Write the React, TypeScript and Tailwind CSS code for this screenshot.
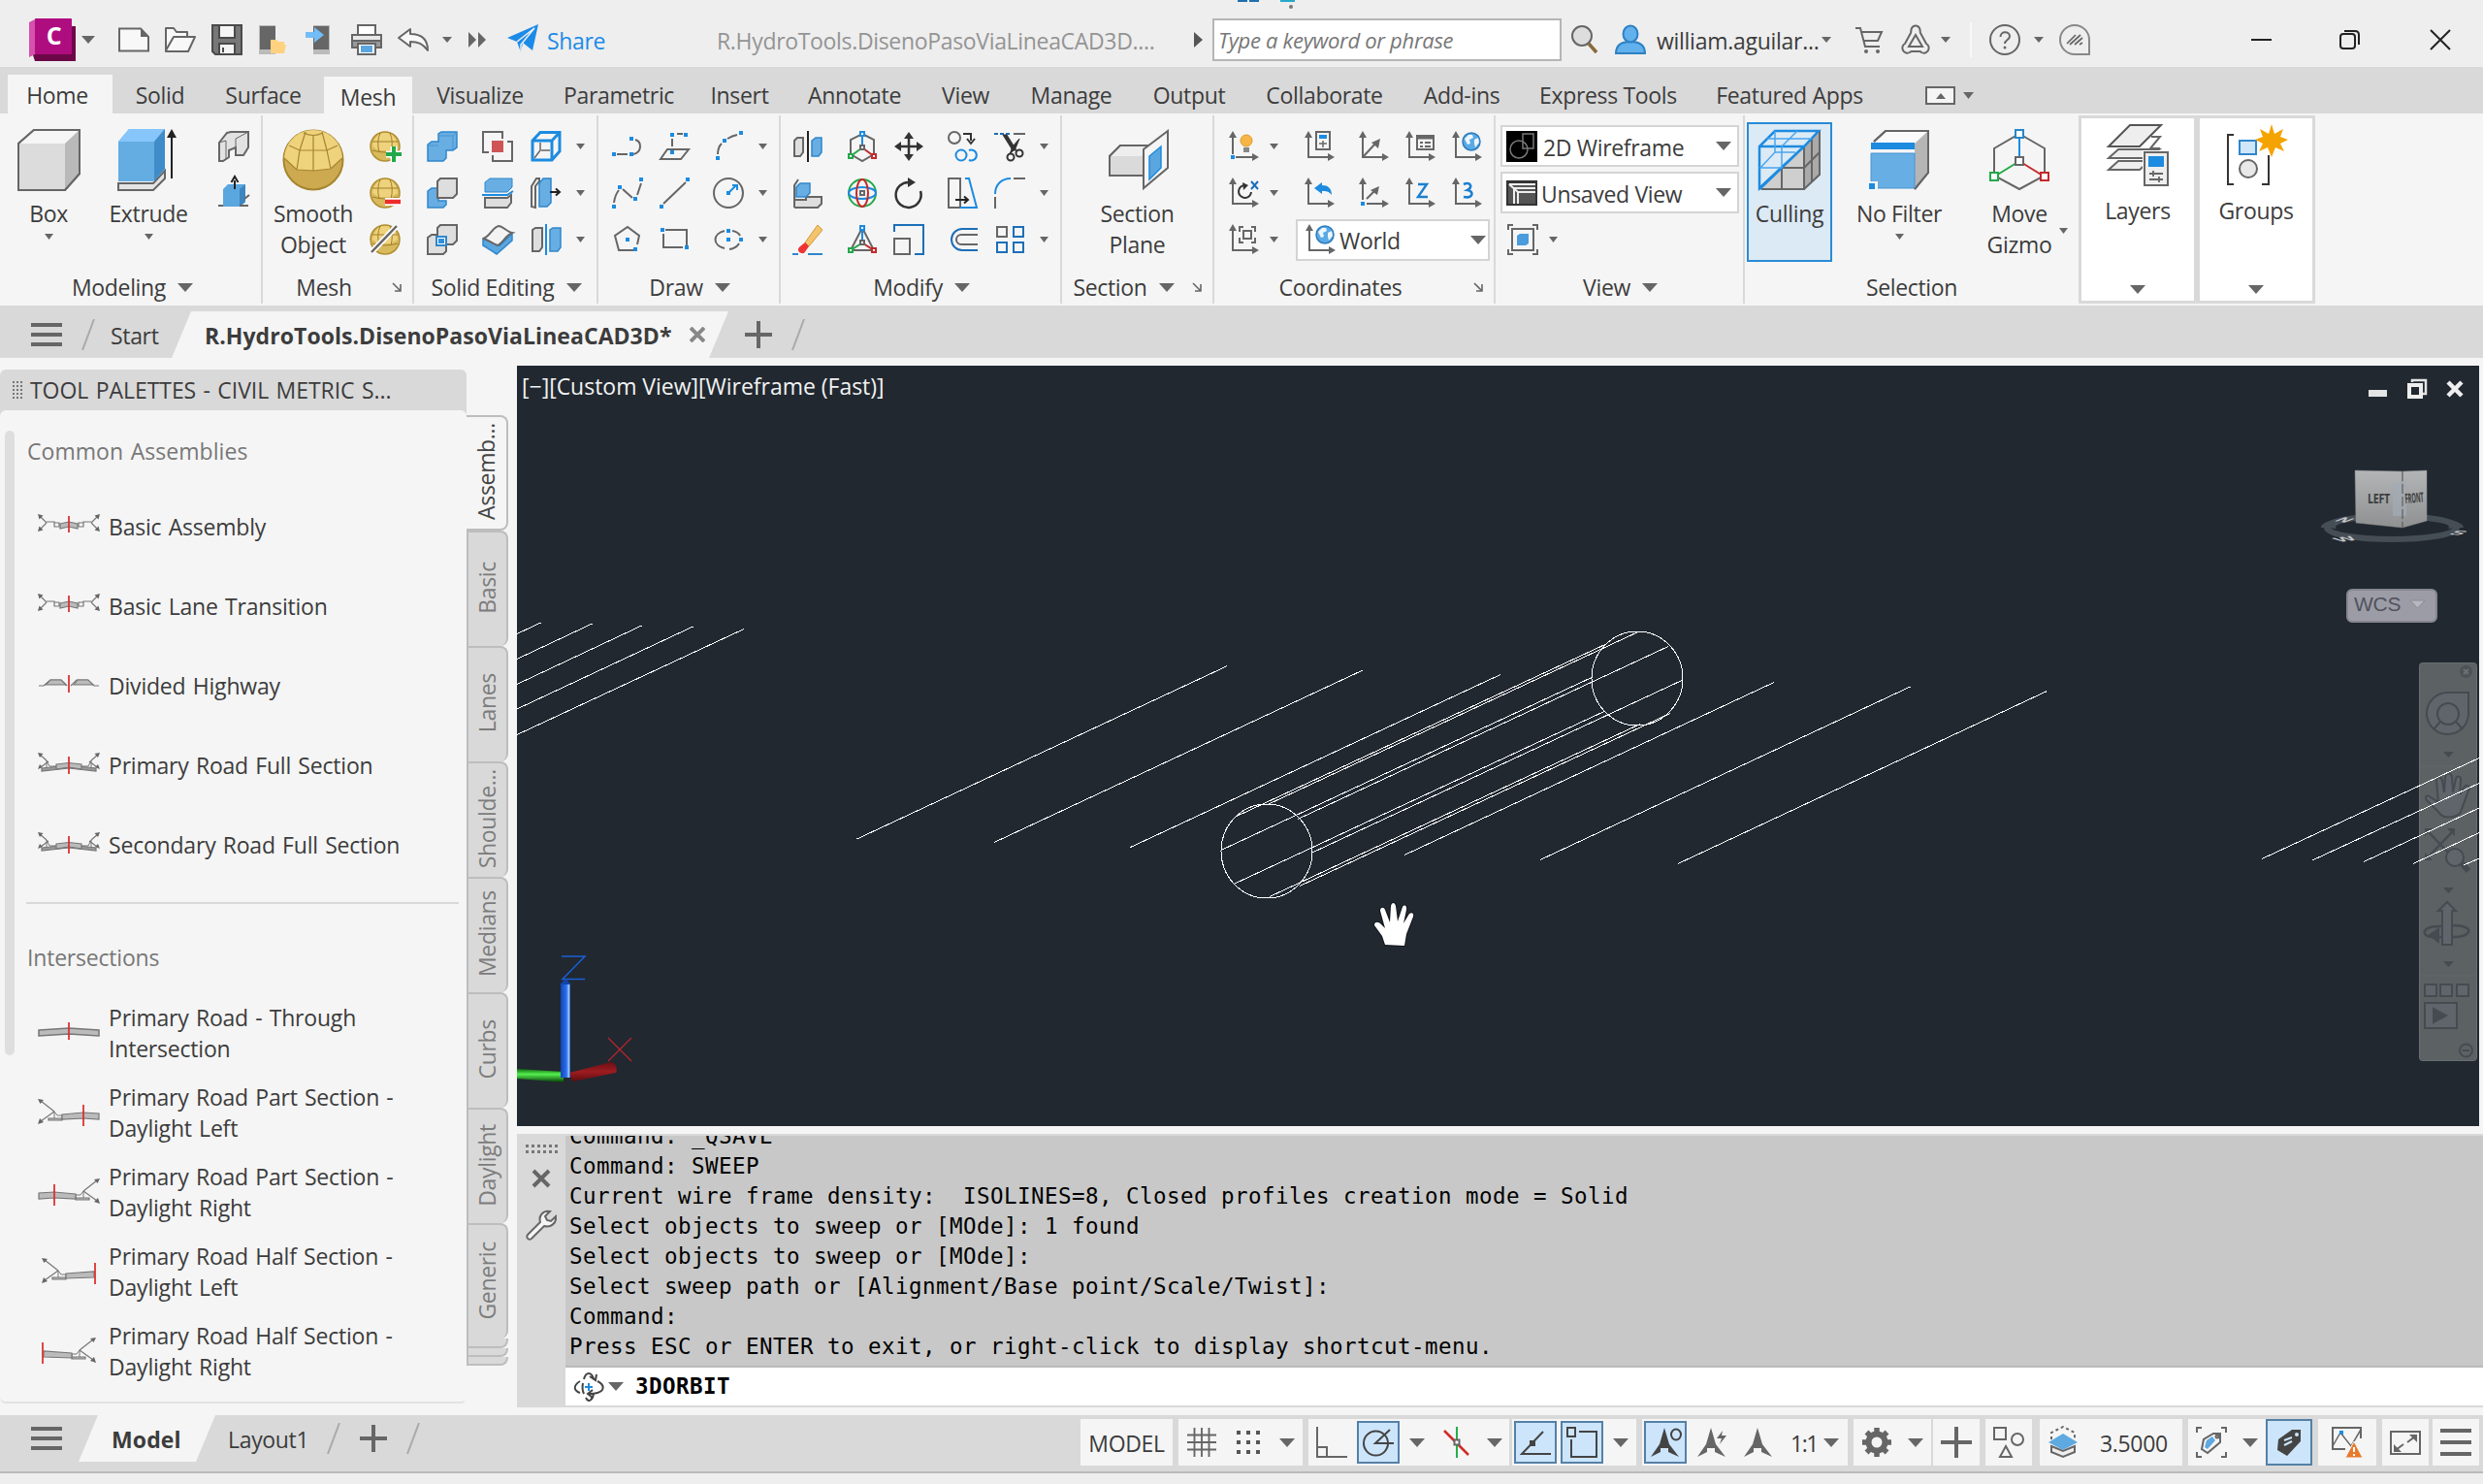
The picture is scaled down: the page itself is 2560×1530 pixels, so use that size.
import React from "react";

type Kids = { children?: React.ReactNode; className?: string };

/* ---------- primitives ---------- */

function Ic({ children, className = "size-8" }: Kids) {
  return (
    <svg viewBox="0 0 32 32" className={`${className} shrink-0 overflow-visible`} fill="none" stroke="#666" strokeWidth="2">
      {children}
    </svg>
  );
}

function Big({ children }: Kids) {
  return (
    <svg viewBox="0 0 64 64" className="size-16 shrink-0 overflow-visible" fill="none" stroke="#666" strokeWidth="2">
      {children}
    </svg>
  );
}

function Down({ className = "w-[9px] h-[6px]" }: { className?: string }) {
  return (
    <svg viewBox="0 0 10 6" preserveAspectRatio="none" className={`${className} shrink-0`} fill="#666">
      <path d="M0 0H10L5 6Z" />
    </svg>
  );
}

const MidDown = () => <Down className="w-4 h-[9px]" />;

function Launcher() {
  return (
    <svg viewBox="0 0 10 10" className="size-[10px] shrink-0" fill="none" stroke="#666" strokeWidth="1.6">
      <path d="M1 1L8 8M9 2V9H3" />
    </svg>
  );
}

/* ---------- title bar icons ---------- */

const Logo = () => (
  <svg viewBox="0 0 48 44" className="h-11 w-12 shrink-0">
    <path d="M4 38L8 8H48V44H6Z" fill="#6c0848" />
    <path d="M0 4L8 0V36L0 40Z" fill="#d650ac" />
    <rect x="6" width="38" height="37" rx="1" fill="#ae0d7f" />
    <text x="25.500" y="27" textAnchor="middle" fontFamily="Open Sans, sans-serif" fontWeight="700" fontSize="25" fill="#fff">C</text>
  </svg>
);

const NewFile = () => (
  <Ic><path d="M1 4.500H23L31 13V27.500H1Z" fill="#f8f8f8" /><path d="M23 4.500V13H31Z" fill="#666" stroke="none" /></Ic>
);
const OpenFile = () => (
  <Ic><path d="M1 27V4H9L12 8H23V13M1 27L9 13H31L24 28H1Z" strokeLinejoin="round" fill="#f8f8f8" /></Ic>
);
const Save = () => (
  <Ic><path d="M1 1H31V31H4L1 28Z" fill="#777" stroke="#4a4a4a" /><rect x="8" y="1" width="16" height="13" fill="#f5f5f5" stroke="#4a4a4a" /><rect x="8" y="20" width="16" height="11" fill="#f5f5f5" stroke="#4a4a4a" /><path d="M12 24V29" stroke="#4a4a4a" /></Ic>
);
const OpenMobile = () => (
  <Ic><rect x="1" y="1" width="17" height="30" fill="#bbb" stroke="none" /><rect x="2" y="2" width="16" height="24" fill="#666" stroke="none" /><path d="M13 30V16H19L21 18H27V21H29L27 30Z" fill="#ffd27f" stroke="none" /></Ic>
);
const SaveMobile = () => (
  <Ic><rect x="9" y="1" width="17" height="30" fill="#bbb" stroke="none" /><rect x="9" y="2" width="16" height="24" fill="#666" stroke="none" /><path d="M1 8H10V3L20 11 10 19V14H1Z" fill="#72bdf7" stroke="none" /></Ic>
);
const Print = () => (
  <Ic><rect x="7" y="1" width="18" height="10" fill="#fff" /><path d="M1 11H31V24H1Z" fill="#999" /><path d="M1 11H31V17H1Z" fill="#e8e8e8" /><rect x="7" y="20" width="18" height="11" fill="#fff" /><rect x="10" y="22" width="12" height="7" fill="#5ba6e0" stroke="none" /></Ic>
);
const Undo = () => (
  <Ic><path d="M1 14L13 5V10C24 10 31 15 31 27C26 20 21 18 13 18V23Z" fill="#f8f8f8" strokeLinejoin="round" /></Ic>
);
const Plane = () => (
  <Ic><path d="M0 14L32 0 26 27 16 19 14 29 10 18Z" fill="#1b8be8" stroke="none" /><path d="M10 18L28 4 14 21V29" stroke="#eee" strokeWidth="1.500" /></Ic>
);
const Magnifier = () => (
  <Ic><circle cx="13" cy="12" r="10" fill="#ddd" /><path d="M20 20L28 29" stroke="#8a6a3c" strokeWidth="3.500" /></Ic>
);
const User = () => (
  <Ic><path d="M1 30C1 22 6 18 16 18S31 22 31 30Z" fill="#62b0ec" stroke="#2d81c4" /><ellipse cx="16" cy="10" rx="7.500" ry="8.500" fill="#62b0ec" stroke="#2d81c4" /></Ic>
);
const Cart = () => (
  <Ic><path d="M2 4H7L12 23H27M8 8H29L25 17H11" /><circle cx="13" cy="28" r="2" fill="#666" stroke="none" /><circle cx="25" cy="28" r="2" fill="#666" stroke="none" /></Ic>
);
const AppStore = () => (
  <Ic><path d="M16 11L23 23H9Z" /><path d="M12 4a4.500 4.500 0 0 1 8 0c1 2 .500 4 1 5L27 20a5 5 0 1 1-5 9c-1-1-1-1-2-1H12c-1 0-1 0-2 1a5 5 0 1 1-5-9L11 9c.500-1 0-3 1-5Z" /></Ic>
);
const Help = () => (
  <Ic><circle cx="16" cy="16" r="15" /><path d="M11.500 13C11.500 6.500 21 7 21 12.500 21 16 16 16 16 20" /><circle cx="16" cy="24" r="1.500" fill="#666" stroke="none" /></Ic>
);
const Assist = () => (
  <Ic><path d="M31 31H16A15 15 0 1 1 31 16Z" stroke="#888" /><path d="M8 20L17 11M11 21L22 11M16 21L24 14M21 21L24 19" strokeWidth="1.700" /></Ic>
);

/* ---------- ribbon small icons ---------- */

const Polysolid = () => <Ic><path d="M1 31V12L9 2 13 1H31V17L26 25H18V17L11 20V27L5 31Z" fill="#e2e2e2" /><path d="M1 12L8 10V30M18 17V8L31 1" strokeWidth="1" /></Ic>;
const PressPull = () => <Ic><path d="M5 12L10 7H28V25L23 30H5Z" fill="#5aa6df" stroke="none" /><path d="M22 12L28 7V25L22 30Z" fill="#3d86c0" stroke="none" /><path d="M0 29H5M22 29H31M27 22L32 18" /><path d="M17 12V3M13.500 5L17 -1 20.500 5" stroke="#222" /></Ic>;

const Ball = ({ children }: Kids) => (
  <Ic><circle cx="16" cy="16" r="15" fill="#d8ba5c" stroke="#b08d30" strokeWidth="1.500" /><path d="M16 2C8 2 3 10 3 16L9 20H22L29 16C28 8 24 2 16 2Z" fill="#efd27c" stroke="none" /><path d="M3 11H29M3 20Q16 24 29 20M11 2Q7 11 10 22M21 2Q25 11 22 22" stroke="#a07f2a" strokeWidth="1" />{children}</Ic>
);
const Union = () => <Ic><path d="M1 31V14L5 11H12V3L15 1H31V17L27 20H20V28L17 31Z" fill="#68aee3" stroke="#2f86cc" strokeWidth="1.500" /><path d="M1 15H12M12 5H27L31 1M27 5V20" stroke="#4795d2" strokeWidth="1" /></Ic>;
const Subtract = () => <Ic><path d="M1 31V14L5 11H12V24H20V28L17 31Z" fill="#68aee3" stroke="#2f86cc" strokeWidth="1.500" /><path d="M11 21V4L14 1H31V17L27 21Z" fill="#dedede" /></Ic>;
const Intersect = () => <Ic><path d="M1 31V14L5 11H20V28L17 31Z" fill="#dedede" /><path d="M11 21V4L14 1H31V17L27 21Z" fill="#dedede" /><rect x="10" y="13" width="10" height="9" fill="#fff" stroke="#2f86cc" /><rect x="12" y="15" width="6" height="5" fill="#2f8fdd" stroke="none" /></Ic>;
const Interfere = () => <Ic><path d="M7 22H1V1H21V8M26 11H31V31H11V25" /><rect x="10" y="10" width="12" height="12" fill="#cf5555" stroke="none" /></Ic>;
const Slice = () => <Ic><path d="M3 15V5L8 1H31V10L26 15Z" fill="#68aee3" stroke="#2f86cc" strokeWidth="1" /><path d="M0 18H26L32 14" stroke="#1c8be0" /><path d="M3 30V21H26L30 18V26L26 31H3Z" fill="#dedede" /></Ic>;
const Thicken = () => <Ic><path d="M1 15L18 22 31 10V17L15 31 1 22Z" fill="#5ba6df" stroke="#2f86cc" strokeWidth="1.500" /><path d="M1 15C8 13 11 3 17 2 21 2 26 8 31 9 25 11 21 20 16 22 10 20 7 16 1 15Z" fill="#f3f3f3" /></Ic>;
const ExtractEdges = () => <Ic><path d="M2 10L10 1.500H30V21L22 30H2ZM2 10H22M22 30V10L30 1.500" stroke="#1c8be0" strokeWidth="3" /><path d="M4 28L10 20V12M11 20H20" strokeWidth="1.500" /></Ic>;
const ExtrudeFace = () => <Ic><path d="M1 30V9L6 1H9V4L5 9V31Z" fill="#eee" /><path d="M9 30V6L13 1H21V26L17 30Z" fill="#68aee3" stroke="#2f86cc" strokeWidth="1.500" /><path d="M20 15H29M26 11.500L30 15 26 18.500" stroke="#222" /></Ic>;
const Separate = () => <Ic><path d="M2 28V6L5 4H12V24L9 28Z" fill="#dedede" /><path d="M16 0V32" stroke="#1c8be0" /><path d="M20 28V6L23 4H31V24L28 28Z" fill="#68aee3" stroke="#2f86cc" strokeWidth="1.500" /></Ic>;

const Dot = ({ x, y, c = "#1c8be0" }: { x: number; y: number; c?: string }) => <rect x={x - 2} y={y - 2} width="4" height="4" fill={c} stroke="none" />;

const Polyline = () => <Ic><path d="M5 24H16M22 24C31 22 31 11 24 9" /><Dot x={2} y={24} /><Dot x={20} y={24} /><Dot x={20} y={8} /></Ic>;
const Spline = () => <Ic><path d="M2 26Q3 18 7 13M11 12L21 21M26 18L30 6" /><Dot x={2} y={30} /><Dot x={8} y={10} /><Dot x={24} y={22} /><Dot x={30} y={2} /></Ic>;
const PolygonI = () => <Ic><path d="M22 27H7L3 12 16 3 28 12 26 21" /><Dot x={16} y={16} /><Dot x={24} y={26} /></Ic>;
const PlanarSurf = () => <Ic><path d="M13 16V8M18 3H24M1 29L8 19H30L22 29Z" /><Dot x={13} y={22} /><Dot x={13} y={4} /><Dot x={27} y={4} /></Ic>;
const LineI = () => <Ic><path d="M4 27L27 5" /><Dot x={2} y={30} /><Dot x={29} y={2} /></Ic>;
const RectI = () => <Ic><path d="M6 6H28V22M24 24H4V10" /><Dot x={3} y={6} /><Dot x={28} y={24} /></Ic>;
const ArcI = () => <Ic><path d="M5 24Q5 17 9 13M15 8Q20 5 25 4" /><Dot x={5} y={28} /><Dot x={12} y={10} /><Dot x={29} y={2} /></Ic>;
const CircleI = () => <Ic><circle cx="16" cy="16" r="15" /><path d="M17 15L24 8M20 8H25V13" stroke="#1c8be0" /><Dot x={16} y={16} /></Ic>;
const EllipseI = () => <Ic><path d="M12 7A14 9.500 0 0 0 12 25M17 26A14 9.500 0 0 0 27 20M20 7Q26 8 28 12" /><Dot x={16} y={7} /><Dot x={16} y={16} /><Dot x={29} y={16} /></Ic>;

const Mirror = () => <Ic><path d="M2 24V10L5 7H11V22L8 26H2Z" fill="#dedede" /><path d="M16 0V32" stroke="#222" /><path d="M20 26V10L24 7H30V22L27 26Z" fill="#68aee3" stroke="#2f86cc" strokeWidth="1.500" /></Ic>;
const Align3D = () => <Ic><path d="M2 31V8L6 2M2 31H26L30 27V20H14V23H2" fill="#dedede" /><path d="M4 20V10L8 6H18V16L14 20Z" fill="#68aee3" stroke="#2f86cc" strokeWidth="1.500" /></Ic>;
const Erase = () => <Ic><path d="M0 31H6M16 31H31" stroke="#2f86cc" /><path d="M13 19L26 1 31 6 17 23Z" fill="#f3c46c" stroke="#d29a3a" strokeWidth="1" /><path d="M13 19L17 23 12 30C6 31 4 26 8 23Z" fill="#e33" stroke="none" /></Ic>;
const GizmoMove = () => <Ic><path d="M16 3L28 9V24L16 31 4 24V9Z" /><path d="M16 4V16" stroke="#1c8be0" /><path d="M15 18L4 26" stroke="#22a84a" /><path d="M17 18L28 26" stroke="#c62828" /><rect x="14" y="1" width="4" height="4" fill="#fff" stroke="#1c8be0" /><rect x="14" y="15" width="4" height="4" fill="#fff" /><rect x="2" y="24" width="4" height="4" fill="#fff" stroke="#22a84a" /><rect x="26" y="24" width="4" height="4" fill="#fff" stroke="#c62828" /></Ic>;
const GizmoRotate = () => <Ic><circle cx="16" cy="16" r="14" stroke="#22a84a" /><ellipse cx="16" cy="16" rx="14" ry="6" stroke="#1c8be0" /><ellipse cx="16" cy="16" rx="6" ry="14" stroke="#c62828" /><rect x="14" y="14" width="4" height="4" fill="#fff" /></Ic>;
const GizmoScale = () => <Ic><path d="M16 4L28 27H4Z" /><path d="M16 4V18" stroke="#1c8be0" /><path d="M15 20L4 27" stroke="#22a84a" /><path d="M17 20L28 27" stroke="#c62828" /><rect x="14" y="2" width="4" height="4" fill="#fff" stroke="#1c8be0" /><rect x="14" y="17" width="4" height="4" fill="#fff" /><rect x="2" y="25" width="4" height="4" fill="#fff" stroke="#22a84a" /><rect x="26" y="25" width="4" height="4" fill="#fff" stroke="#c62828" /></Ic>;
const MoveI = () => <Ic><path d="M16 4V28M4 16H28" stroke="#333" strokeWidth="2.500" /><path d="M16 1L21 8H11ZM16 31L21 24H11ZM1 16L8 11V21ZM31 16L24 11V21Z" fill="#333" stroke="none" /></Ic>;
const RotateI = () => <Ic><path d="M17 5A13 13 0 1 0 28 14" stroke="#333" strokeWidth="2.500" /><path d="M15 0L23 5 15 10Z" fill="#333" stroke="none" /></Ic>;
const ScaleI = () => <Ic><path d="M1 8V1H31V31H22" stroke="#1c6fb8" /><rect x="1" y="15" width="16" height="16" /></Ic>;
const CopyI = () => <Ic><circle cx="7" cy="7" r="6" /><path d="M16 3H24V10M20 8L24 13 28 8" stroke="#333" /><circle cx="14" cy="25" r="5.500" stroke="#1c8be0" /><path d="M22 20A5.500 5.500 0 1 1 22 30" stroke="#1c8be0" /></Ic>;
const StretchI = () => <Ic><path d="M1 1H13V31H1Z" /><path d="M18 1H22L30 31H13" stroke="#1c8be0" /><path d="M8 23H20M17 19.500L21 23 17 26.500" stroke="#222" /></Ic>;
const OffsetI = () => <Ic><path d="M31 5H15A11 11 0 0 0 15 27H31" stroke="#1c6fb8" /><path d="M31 11H14A5 5 0 0 0 14 21H31" /></Ic>;
const TrimI = () => <Ic><path d="M0 3H16" stroke="#1c6fb8" strokeDasharray="4 2" /><path d="M20 3H32" /><path d="M9 4L13 4 23 20 19 20ZM26 8L22 18 16 24 19 16Z" fill="#333" stroke="#333" strokeWidth="1" /><circle cx="17" cy="27" r="3.500" stroke="#333" /><circle cx="26" cy="23" r="3.500" stroke="#333" /></Ic>;
const FilletI = () => <Ic><path d="M1 32V20M20 1H32" /><path d="M1 17C1 7 8 1 17 1" stroke="#1c8be0" /></Ic>;
const ArrayI = () => <Ic><rect x="3" y="3" width="10" height="10" /><rect x="20" y="3" width="10" height="10" stroke="#1c6fb8" /><rect x="3" y="19" width="10" height="10" stroke="#1c6fb8" /><rect x="20" y="19" width="10" height="10" stroke="#1c6fb8" /></Ic>;

const Ucs = ({ children }: Kids) => (
  <Ic><path d="M5 5V27H28" /><path d="M5 0L9 7H1ZM32 27L25 23V31Z" fill="#666" stroke="none" />{children}</Ic>
);
const Globe = () => <g><circle cx="21" cy="11" r="9" fill="#5aaae6" stroke="#2d7cbd" strokeWidth="1.500" /><path d="M14 8L18 4 22 4 23 7 19 9 20 13 17 14ZM24 9L28 7 29 12 25 17 24 13Z" fill="#eef6fc" stroke="none" /></g>;
const UcsLight = () => <Ucs><circle cx="19" cy="10" r="6" fill="#f6b544" stroke="#dd9a2a" strokeWidth="1" /><rect x="16" y="17" width="6" height="5" fill="#888" stroke="none" /><rect x="2" y="24" width="6" height="6" fill="#f5f5f5" stroke="none" /><Dot x={5} y={27} /></Ucs>;
const UcsX = () => <Ucs><path d="M18 8A6.500 6.500 0 1 0 24 15" stroke="#333" /><path d="M15 5L21 8 16 13Z" fill="#333" stroke="none" /><path d="M24 4L31 12M31 4L24 12" stroke="#1c6fb8" /></Ucs>;
const UcsFrame = () => <Ucs><path d="M12 8V3H16M24 3H28V8M12 14V19H16M24 19H28V14" /><rect x="16" y="7" width="8" height="8" /></Ucs>;
const UcsPlus = () => <Ucs><rect x="13" y="1" width="14" height="18" fill="#f5f5f5" /><rect x="16" y="4" width="8" height="4" fill="#1c8be0" stroke="none" /><path d="M16 13H24M20 10V17" strokeWidth="1.500" /></Ucs>;
const UcsPrev = () => <Ucs><path d="M11 11L19 5V8C25 8 29 11 29 18 26 14 23 14 19 14V17Z" fill="#1c8be0" stroke="none" /></Ucs>;
const Ucs3Axis = () => <Ucs><path d="M6 26L18 13" /><path d="M23 8L21 18 14 12Z" fill="#666" stroke="none" /></Ucs>;
const UcsOrigin = () => <Ucs><path d="M9 22L18 13" /><path d="M22 9L20 18 13 13Z" fill="#666" stroke="none" /><rect x="1" y="23" width="8" height="8" fill="#f5f5f5" stroke="none" /><Dot x={5} y={27} /></Ucs>;
const UcsList = () => <Ucs><rect x="13" y="5" width="17" height="14" fill="#f5f5f5" /><path d="M13 7H30" strokeWidth="3" /><path d="M16 12H19M21 12H27M16 16H19M21 16H27" strokeWidth="1.800" /></Ucs>;
const UcsZ = () => <Ucs><path d="M14 7H23L14 20H24" stroke="#1c7fd0" strokeWidth="2.400" /></Ucs>;
const Ucs3 = () => <Ucs><path d="M13 7C20 4 23 10 17 13 24 14 23 22 13 20" stroke="#1c7fd0" strokeWidth="2.600" /></Ucs>;
const UcsGlobe = () => <Ucs><Globe /></Ucs>;
const ViewFrame = () => <Ic><path d="M1 6V1H6M26 1H31V6M1 26V31H6M26 31H31V26" /><rect x="5" y="5" width="22" height="22" /><path d="M10 12L13 10H22V20L19 22H10Z" fill="#4a9cdc" stroke="none" /></Ic>;

/* ---------- ribbon large icons ---------- */

const BoxBig = () => <Big><path d="M1 15L17 1H64V46L49 63H1Z" fill="#dcdcdc" /><path d="M1 15L17 1H64L49 15Z" fill="#f6f6f6" stroke="none" /><path d="M49 15L64 1V46L49 63Z" fill="#b9b9b9" stroke="none" /><path d="M1 15L17 1H64V46L49 63H1Z" /></Big>;
const ExtrudeBig = () => (
  <Big>
    <path d="M1 63V56H37L49 43V51L37 63Z" fill="#e4e4e4" />
    <path d="M1 13L12 0H49V41L37 54H1Z" fill="#63ade3" stroke="none" /><path d="M1 13L12 0H49L38 13Z" fill="#86c6fa" stroke="none" /><path d="M38 13L49 0V41L38 54Z" fill="#3f8cc8" stroke="none" />
    <path d="M56 51V5" stroke="#222" /><path d="M56 0L61 9H51Z" fill="#222" stroke="none" />
  </Big>
);
const SphereBig = () => (
  <Big><circle cx="32" cy="32" r="30.500" fill="#cdaa50" stroke="#a5852f" /><path d="M2 30L15 42 33 43 50 41 62 30C61 13 48 1 32 1S3 13 2 30Z" fill="#efd27c" stroke="none" /><path d="M7 17L18 22H46L57 17M24 3L18 22 15 42M41 3L46 22 50 41M2 30L15 42 33 43 50 41 62 30M32 6V43M22 4Q32 9 42 4" stroke="#a5852f" strokeWidth="1.200" /></Big>
);
const SectionBig = () => <Big><path d="M3 48V28L14 17H44L38 48Z" fill="#dadada" /><path d="M3 28H36L44 17H14Z" fill="#eee" stroke="none" /><path d="M3 48V28L14 17H44V28L38 48Z" /><path d="M38 61V21L63 2V40Z" fill="#f5f5f5" /><path d="M44 52V28L56 18V40Z" fill="#5aa6df" stroke="#1c8be0" strokeWidth="1.500" /></Big>;
const CullingBig = () => (
  <Big>
    <path d="M1 63L47 17 63 2V47L47 62H1Z" fill="#cfcfcf" stroke="none" /><path d="M47 17L63 2V47L47 62Z" fill="#aaa" stroke="none" />
    <path d="M24 40V62M24 40H47L63 24M47 18V62H3M47 62L63 47V2M55 10V55" />
    <path d="M1 61V18L17 2H62L47 18ZM1 18H47L1 62" stroke="#1c8be0" strokeWidth="2.500" /><path d="M9 10H55M24 18L40 2M24 18V40M1 40H24M17 2V24L2 40M17 24H38" stroke="#4aa5ee" strokeWidth="1.500" />
  </Big>
);
const FilterBig = () => <Big><path d="M6 13L18 2H62V45L48 62" fill="#fafafa" /><path d="M48 15L62 2V45L48 60Z" fill="#b5b5b5" stroke="none" /><path d="M6 13L18 2H62V45L48 62" /><rect x="3" y="14" width="45" height="7" fill="#1c8be0" stroke="none" /><path d="M3 21H48V25H3Z" fill="#f5f5f5" stroke="none" /><path d="M3 25H48V61H3Z" fill="#66aee4" stroke="#4795d2" strokeWidth="1" /><rect x="0" y="54" width="10" height="10" fill="#f5f5f5" stroke="none" /><rect x="1" y="56" width="6" height="6" fill="#1c8be0" stroke="none" /></Big>;
const GizmoBig = () => <Big><path d="M32 5L58 20V48L32 62 6 48V20Z" /><path d="M32 10V32" stroke="#1c8be0" /><path d="M29 35L8 48" stroke="#22a84a" /><path d="M35 35L56 48" stroke="#c62828" /><rect x="28" y="1" width="8" height="8" fill="#fff" stroke="#2787c9" /><rect x="28" y="29" width="8" height="8" fill="#fff" /><rect x="2" y="45" width="8" height="8" fill="#fff" stroke="#22a84a" /><rect x="54" y="45" width="8" height="8" fill="#fff" stroke="#c62828" /></Big>;
const LayersBig = () => <Big><path d="M2 47L12 38H44L34 47Z" fill="#eee" /><path d="M2 35L12 26H54L40 35Z" fill="#eee" /><path d="M46 13H55L45 25H55" /><path d="M2 23L24 1H56L34 23Z" fill="#eee" stroke="#555" /><rect x="37" y="27" width="28" height="38" fill="#fff" stroke="none" /><rect x="39" y="29" width="24" height="34" fill="#eee" /><rect x="43" y="33" width="16" height="11" fill="#1c8be0" stroke="none" /><path d="M44 51H58M44 57H58M48 48V54M54 54V60" strokeWidth="1.800" /></Big>;
const GroupsBig = () => <Big><path d="M9 11H3V62H9M38 62H45V32" stroke="#333" /><rect x="15" y="17" width="17" height="14" fill="#cfe6f8" stroke="#2f86cc" /><circle cx="24" cy="46" r="9" fill="#e8e8e8" /><path d="M48 0L51 10 60 5 57 13 65 16 57 20 61 28 52 24 48 34 44 24 35 28 39 20 31 16 39 13 36 5 45 10Z" fill="#f5a300" stroke="none" /></Big>;

/* ---------- ribbon pieces ---------- */

function Panel({ width, label, arrow = true, launcher = false, children }: { width: string; label: string; arrow?: boolean; launcher?: boolean; children: React.ReactNode }) {
  return (
    <section className={`relative flex h-[198px] shrink-0 flex-col ${width} after:absolute after:right-0 after:top-[2px] after:h-[194px] after:w-[2px] after:bg-[#d9d9d9]`}>
      <div className="flex h-[154px] pt-[10px]">{children}</div>
      <div className={`relative flex h-[44px] items-center justify-center gap-3 pt-[6px] ${launcher ? "pr-[30px]" : ""}`}>
        <span>{label}</span>
        {arrow && <MidDown />}
        {launcher && <div className="absolute right-[13px] top-[20px]"><Launcher /></div>}
      </div>
    </section>
  );
}

function Tool({ icon, lines, arrow = false, className = "" }: { icon: React.ReactNode; lines: string[]; arrow?: boolean; className?: string }) {
  return (
    <div className={`flex shrink-0 flex-col items-center pt-[6px] ${className}`}>
      {icon}
      <div className="mt-[7px] text-center leading-8 whitespace-nowrap">{lines.map((l) => <div key={l}>{l}</div>)}</div>
      {arrow && <div className="mt-[5px]"><Down /></div>}
    </div>
  );
}

function Combo({ icon, text, className = "" }: { icon?: React.ReactNode; text: string; className?: string }) {
  return (
    <div className={`flex h-[43px] shrink-0 items-center border-2 border-[#d4d4d4] bg-white ${className}`}>
      {icon}
      <span className="flex-1 pt-[3px] whitespace-nowrap">{text}</span>
      <MidDown />
    </div>
  );
}

const iconGrid = "grid shrink-0 auto-rows-[48px] items-center justify-items-center ";

function Ribbon() {
  return (
    <div className="flex h-[198px] bg-[#f5f5f5] pl-[2px]">
      <Panel width="w-[269px]" label="Modeling">
        <Tool className="w-[96px]" icon={<BoxBig />} lines={["Box"]} arrow />
        <Tool className="w-[110px]" icon={<ExtrudeBig />} lines={["Extrude"]} arrow />
        <div className={iconGrid + "ml-[2px] grid-cols-[62px]"}><Polysolid /><PressPull /></div>
      </Panel>
      <Panel width="w-[156px]" label="Mesh" arrow={false} launcher>
        <Tool className="w-[104px]" icon={<SphereBig />} lines={["Smooth", "Object"]} />
        <div className={iconGrid + "grid-cols-[44px]"}>
          <Ball><path d="M17 24H33M25 16V32" stroke="#fff" strokeWidth="7" /><path d="M17 24H33M25 16V32" stroke="#22a84a" strokeWidth="4" /></Ball>
          <Ball><path d="M16 25H32" stroke="#fff" strokeWidth="8" /><path d="M16 25H32" stroke="#ee2c2c" strokeWidth="4.500" /></Ball>
          <Ball><path d="M2 29L28 2" stroke="#fff" strokeWidth="6" /><path d="M2 29L28 2" strokeWidth="2.500" /></Ball>
        </div>
      </Panel>
      <Panel width="w-[190px]" label="Solid Editing">
        <div className={iconGrid + "grid-cols-[58px_56px_44px_26px]"}>
          <Union /><Interfere /><ExtractEdges /><Down />
          <Subtract /><Slice /><ExtrudeFace /><Down />
          <Intersect /><Thicken /><Separate /><Down />
        </div>
      </Panel>
      <Panel width="w-[188px]" label="Draw">
        <div className={iconGrid + "ml-[5px] grid-cols-[50px_48px_62px_8px]"}>
          <Polyline /><PlanarSurf /><ArcI /><Down />
          <Spline /><LineI /><CircleI /><Down />
          <PolygonI /><RectI /><EllipseI /><Down />
        </div>
      </Panel>
      <Panel width="w-[290px]" label="Modify">
        <div className={iconGrid + "grid-cols-[56px_56px_40px_72px_24px_46px]"}>
          <Mirror /><GizmoMove /><MoveI /><CopyI /><TrimI /><Down />
          <Align3D /><GizmoRotate /><RotateI /><StretchI /><FilletI /><Down />
          <Erase /><GizmoScale /><ScaleI /><OffsetI /><ArrayI /><Down />
        </div>
      </Panel>
      <Panel width="w-[157px]" label="Section" launcher>
        <Tool className="w-[155px]" icon={<SectionBig />} lines={["Section", "Plane"]} />
      </Panel>
      <Panel width="w-[290px]" label="Coordinates" arrow={false} launcher>
        <div className={iconGrid + "grid-cols-[60px_2px_92px_20px_76px_20px]"}>
          <UcsLight /><Down /><UcsPlus /><Ucs3Axis /><UcsList /><UcsGlobe />
          <UcsX /><Down /><UcsPrev /><UcsOrigin /><UcsZ /><Ucs3 />
          <UcsFrame /><Down />
          <div className="col-span-4 justify-self-start pl-[22px]"><Combo className="w-[200px] gap-[4px] pr-[2px] pl-[7px]" icon={<UcsGlobe />} text="World" /></div>
        </div>
      </Panel>
      <Panel width="w-[257px]" label="View">
        <div className="ml-[5px] flex flex-col gap-[5px] pt-[2px]">
          <Combo
            className="w-[246px] gap-[6px] pr-[6px] pl-[4px]"
            icon={<svg viewBox="0 0 32 32" className="size-8 bg-black" fill="none" stroke="#777" strokeWidth="1.500"><circle cx="13" cy="19" r="9" /><rect x="17" y="3" width="11" height="15" /></svg>}
            text="2D Wireframe"
          />
          <Combo
            className="w-[246px] gap-[4px] pr-[6px] pl-[4px]"
            icon={<svg viewBox="0 0 32 26" className="h-[26px] w-8"><rect width="32" height="26" fill="#333" /><rect x="2" y="3" width="28" height="21" fill="#555" /><path d="M3 4H30M8 24V8H30M12 24V12H30M3 4L12 12" stroke="#eee" strokeWidth="2" fill="none" /></svg>}
            text="Unsaved View"
          />
          <div className="mt-[6px] flex items-center gap-[11px] pl-[7px]"><ViewFrame /><Down /></div>
        </div>
      </Panel>
      <section className="flex h-[198px] w-[344px] shrink-0 flex-col">
        <div className="flex h-[154px] pt-[9px]">
          <div className="ml-[2px] h-[144px] w-[88px] border-2 border-[#2a8bd6] bg-[#dceaf5]"><Tool className="-mt-[1px] w-[84px]" icon={<CullingBig />} lines={["Culling"]} /></div>
          <Tool className="ml-[9px] w-[120px] pt-[7px]" icon={<FilterBig />} lines={["No Filter"]} arrow />
          <Tool className="w-[128px] pt-[7px]" icon={<GizmoBig />} lines={["Move", "Gizmo"]} />
          <div className="-ml-[23px] pt-[109px]"><Down /></div>
        </div>
        <div className="flex h-[44px] items-center justify-center pt-[6px]">Selection</div>
      </section>
      <div className="mt-[2px] flex h-[194px] w-[122px] shrink-0 flex-col items-center border-[3px] border-[#d9d9d9] bg-white pt-[6px]">
        <LayersBig /><div className="mt-[9px] leading-8">Layers</div><div className="mt-[61px]"><MidDown /></div>
      </div>
      <div className="mt-[2px] flex h-[194px] w-[122px] shrink-0 flex-col items-center border-[3px] border-[#d9d9d9] bg-white pt-[6px]">
        <GroupsBig /><div className="mt-[9px] leading-8">Groups</div><div className="mt-[61px]"><MidDown /></div>
      </div>
    </div>
  );
}

/* ---------- title bar ---------- */

function TitleBar() {
  return (
    <header className="relative flex h-[69px] shrink-0 items-center overflow-hidden bg-[#eee] pt-[13px]">
      <div className="absolute top-0 left-[1276px] flex">
        <div className="h-[2px] w-[10px] bg-[#1f6fae]" /><div className="ml-[2px] h-[2px] w-[10px] bg-[#1f6fae]" />
        <div className="ml-[22px] h-[2px] w-[15px] bg-[#25a9c9]" />
      </div>
      <div className="absolute top-[5px] left-[1329px] size-[4px] rounded-full bg-[#777]" />
      <div className="absolute -top-[13px] left-[2183px] text-[12px] leading-[18px] tracking-[-0.5px] text-[#444]">2025/09/22</div>
      <div className="ml-[30px]"><Logo /></div>
      <Down className="ml-[6px] h-[8px] w-[14px]" />
      <div className="ml-[24px] flex gap-[16px]"><NewFile /><OpenFile /><Save /><OpenMobile /><SaveMobile /><Print /><Undo /></div>
      <Down className="ml-[14px] h-[6px] w-[10px]" />
      <svg viewBox="0 0 18 16" className="ml-[17px] h-4 w-[18px]" fill="#666"><path d="M0 0L8 8 0 16ZM10 0L18 8 10 16Z" /></svg>
      <div className="ml-[22px]"><Plane /></div>
      <span className="ml-[9px] w-[175px] pt-[2px] text-[#1b8be8]">Share</span>
      <span className="w-[492px] pt-[2px] whitespace-nowrap text-[#949494]">R.HydroTools.DisenoPasoViaLineaCAD3D....</span>
      <svg viewBox="0 0 9 16" className="h-4 w-[9px]" fill="#555"><path d="M0 0L9 8 0 16Z" /></svg>
      <div className="ml-[10px] flex h-11 w-[360px] items-center border-2 border-[#b5b5b5] bg-white pl-[4px] text-[22px] tracking-[-0.3px] text-[#777] italic">Type a keyword or phrase</div>
      <div className="ml-[8px]"><Magnifier /></div>
      <div className="ml-[15px]"><User /></div>
      <span className="ml-[11px] w-[169px] pt-[2px] tracking-[-0.28px] whitespace-nowrap">william.aguilar...</span>
      <Down className="ml-px h-[6px] w-[10px]" />
      <div className="ml-[23px]"><Cart /></div>
      <div className="ml-[16px]"><AppStore /></div>
      <Down className="ml-[10px] h-[6px] w-[10px]" />
      <div className="mr-[18px] ml-[20px] h-9 w-[2px] bg-[#f8f8f8]" />
      <Help />
      <Down className="ml-[14px] h-[6px] w-[10px]" />
      <div className="ml-[16px]"><Assist /></div>
      <div className="ml-[166px] h-[2px] w-[21px] bg-[#222]" />
      <svg viewBox="0 0 22 22" className="ml-[70px] size-[22px]" fill="none" stroke="#222" strokeWidth="2"><rect x="1" y="5" width="15" height="15" rx="3" /><path d="M5 2H16C19 2 20 3 20 6V16" /></svg>
      <svg viewBox="0 0 22 22" className="ml-[71px] size-[22px]" fill="none" stroke="#222" strokeWidth="2"><path d="M1 1L21 21M21 1L1 21" /></svg>
    </header>
  );
}

const TABS: [string, string][] = [
  ["Home", "w-[108px] bg-[#f5f5f5] h-[40px] pt-[3px] pr-[6px]"],
  ["Solid", "w-[98px]"],
  ["Surface", "w-[120px] pr-[5px]"],
  ["Mesh", "w-[91px] bg-[#f5f5f5] h-[38px] pt-[4px]"],
  ["Visualize", "w-[140px]"],
  ["Parametric", "w-[148px] pr-[2px]"],
  ["Insert", "w-[99px]"],
  ["Annotate", "w-[138px]"],
  ["View", "w-[91px]"],
  ["Manage", "w-[127px]"],
  ["Output", "w-[116px]"],
  ["Collaborate", "w-[163px]"],
  ["Add-ins", "w-[122px] pr-[2px]"],
  ["Express Tools", "w-[181px] pr-[3px]"],
  ["Featured Apps", "w-[193px] pr-[3px]"],
];

function RibbonTabs() {
  return (
    <nav className="flex h-[48px] shrink-0 items-end bg-[#d9d9d9] pl-[8px]">
      {TABS.map(([name, cls]) => (
        <div key={name} className={`flex shrink-0 items-center justify-center whitespace-nowrap ${cls.includes("h-[") ? cls : cls + " h-[40px] pt-[3px]"}`}>{name}</div>
      ))}
      <div className="mb-[9px] ml-[42px] flex h-[19px] w-[31px] items-center justify-center border-2 border-[#666] bg-[#f5f5f5]"><Down className="h-[6px] w-[10px] rotate-180" /></div>
      <Down className="mb-[15px] ml-[8px] h-[7px] w-[11px]" />
    </nav>
  );
}

/* ---------- tab strips ---------- */

const Burger = () => (
  <div className="flex w-8 shrink-0 flex-col gap-[6px]"><div className="h-1 bg-[#666]" /><div className="h-1 bg-[#666]" /><div className="h-1 bg-[#666]" /></div>
);
const Slash = ({ className = "" }: { className?: string }) => (
  <svg viewBox="0 0 14 32" className={`h-8 w-[14px] shrink-0 ${className}`} stroke="#aaa" strokeWidth="2"><path d="M1 32L13 0" /></svg>
);
const Plus = ({ className = "" }: { className?: string }) => (
  <svg viewBox="0 0 28 28" className={`size-7 shrink-0 ${className}`} stroke="#666" strokeWidth="4"><path d="M0 14H28M14 0V28" /></svg>
);

function FileTabs() {
  return (
    <div className="flex h-[54px] shrink-0 items-center bg-[#d9d9d9] pt-[6px] pl-[32px]">
      <Burger />
      <Slash className="ml-[20px]" />
      <span className="ml-[16px] w-[63px] pt-[3px]">Start</span>
      <div className="flex h-[48px] w-[574px] items-center bg-[#f5f5f5] pt-[3px] pl-[34px] [clip-path:polygon(20px_0,100%_0,calc(100%-20px)_100%,0_100%)]">
        <span className="w-[500px] text-[23px] font-bold tracking-[0.05px] whitespace-nowrap">R.HydroTools.DisenoPasoViaLineaCAD3D*</span>
        <svg viewBox="0 0 16 16" className="mb-[3px] size-4" stroke="#888" strokeWidth="4"><path d="M1 1L15 15M15 1L1 15" /></svg>
      </div>
      <Plus className="ml-[17px]" />
      <Slash className="ml-[20px]" />
    </div>
  );
}

/* ---------- tool palettes ---------- */

type Section = "basic" | "divided" | "primary" | "through" | "partL" | "partR" | "halfL" | "halfR";

/* Pair of daylight arrows leaving a point on the left of the section */
const Arrows = ({ y }: { y: number }) => (
  <g transform={`translate(0 ${y})`}>
    <path d="M9 0L2 -7M9 0L2 7" />
    <path d="M0 -9L5.500 -7.500 1.500 -3.500ZM0 9L5.500 7.500 1.500 3.500Z" fill="#666" stroke="none" />
  </g>
);
const Flip = ({ children }: Kids) => <g transform="translate(64 0) scale(-1 1)">{children}</g>;

const Daylight = () => (
  <g>
    <path d="M17 17L3 6M17 17L3 27" /><path d="M0 4L6 5 2.500 9ZM0 30L2 24 6 28Z" fill="#666" stroke="none" />
    <path d="M17 17V24M17 17L20 21H25V25" strokeWidth="1" /><path d="M11 24H25V26H11Z" fill="#bbb" />
  </g>
);
const BasicHalf = () => <g><Arrows y={14} /><path d="M9 13H17V18H22V14H17M17 18V14" /></g>;
const PrimaryHalf = () => <g><path d="M9 13L2 7M11 14L3 20" /><path d="M0 5L5.500 6 2 10ZM0 22L2 17 5 20Z" fill="#666" stroke="none" /><path d="M9 13L12 19H19M9 13V20" strokeWidth="1" /></g>;

function SectionIcon({ kind }: { kind: Section }) {
  const art: Record<Section, React.ReactNode> = {
    basic: (<><BasicHalf /><Flip><BasicHalf /></Flip><path d="M23 15L32 13 41 15V20L32 18 23 20Z" fill="#bbb" /><path d="M32 7V24" stroke="#d33" strokeWidth="1.800" /></>),
    divided: (<><path d="M1 18H6L13 12H24L30 18M34 18L40 12H51L58 18H63" /><path d="M8 17L13 12H24L29 17ZM37 17L41 12H52L57 17Z" fill="#bbb" /><path d="M32 7V25" stroke="#d33" strokeWidth="1.800" /></>),
    primary: (<><PrimaryHalf /><Flip><PrimaryHalf /></Flip><path d="M4 21L32 18 60 21V24L32 21 4 24Z" fill="#999" /><path d="M19 17L32 15.500 45 17V22L32 20 19 22Z" fill="#bbb" /><path d="M32 9V27" stroke="#d33" strokeWidth="1.800" /></>),
    through: (<><path d="M1 15L32 13 63 15V21L32 19 1 21Z" fill="#bbb" strokeWidth="1.500" /><path d="M32 7V25" stroke="#d33" strokeWidth="1.800" /></>),
    partL: (<><Daylight /><path d="M25 20L47 18 63 19V25L47 24 25 25Z" fill="#bbb" /><path d="M47 10V32" stroke="#d33" strokeWidth="1.800" /></>),
    partR: (<><Flip><Daylight /></Flip><path d="M39 20L17 18 1 19V25L17 24 39 25Z" fill="#bbb" /><path d="M17 10V32" stroke="#d33" strokeWidth="1.800" /></>),
    halfL: (<><g transform="translate(4 0)"><Daylight /></g><path d="M29 20L58 18V24L29 25Z" fill="#bbb" /><path d="M59 9V31" stroke="#d33" strokeWidth="1.800" /></>),
    halfR: (<><g transform="translate(60 0) scale(-1 1)"><Daylight /></g><path d="M35 20L6 18V24L35 25Z" fill="#bbb" /><path d="M5 9V31" stroke="#d33" strokeWidth="1.800" /></>),
  };
  return <svg viewBox="0 0 64 36" className="h-9 w-16 shrink-0" fill="none" stroke="#777" strokeWidth="1.200">{art[kind]}</svg>;
}

function PaletteItem({ kind, lines }: { kind: Section; lines: string[] }) {
  return (
    <div className="flex h-[82px] items-center gap-[9px] pl-[39px]">
      <SectionIcon kind={kind} />
      <div className="leading-8 whitespace-nowrap">{lines.map((l) => <div key={l}>{l}</div>)}</div>
    </div>
  );
}

function Palette() {
  return (
    <aside className="flex w-[533px] shrink-0 bg-[#f5f5f5] pt-[12px]">
      <div className="flex w-[481px] flex-col tracking-[-0.2px] [word-spacing:1.5px]">
        <div className="h-[48px] rounded-t-md bg-[#d9d9d9]">
          <div className="flex h-[42px] items-center gap-[8px] pl-[13px]">
            <div className="grid grid-cols-3 gap-[2px]">{Array.from({ length: 15 }, (_, i) => <div key={i} className="size-[2px] bg-[#777]" />)}</div>
            <span className="tracking-[-0.05px]">TOOL PALETTES - CIVIL METRIC S...</span>
          </div>
        </div>
        <div className="relative -mt-[6px] h-[1024px] rounded-md border-r-2 border-b-2 border-[#e2e2e2] border-r-transparent bg-[#f5f5f5] pt-[26px]">
          <div className="absolute top-[21px] left-[5px] h-[644px] w-[10px] rounded-full bg-[#dedede]" />
          <div className="pl-[28px] leading-8 tracking-[0.05px] text-[#777]">Common Assemblies</div>
          <div className="mt-[21px]">
            <PaletteItem kind="basic" lines={["Basic Assembly"]} />
            <PaletteItem kind="basic" lines={["Basic Lane Transition"]} />
            <PaletteItem kind="divided" lines={["Divided Highway"]} />
            <PaletteItem kind="primary" lines={["Primary Road Full Section"]} />
            <PaletteItem kind="primary" lines={["Secondary Road Full Section"]} />
          </div>
          <div className="mt-[18px] ml-[27px] h-[2px] w-[446px] bg-[#d9d9d9]" />
          <div className="mt-[39px] pl-[28px] leading-8 text-[#777]">Intersections</div>
          <div className="mt-[21px]">
            <PaletteItem kind="through" lines={["Primary Road - Through", "Intersection"]} />
            <PaletteItem kind="partL" lines={["Primary Road Part Section -", "Daylight Left"]} />
            <PaletteItem kind="partR" lines={["Primary Road Part Section -", "Daylight Right"]} />
            <PaletteItem kind="halfL" lines={["Primary Road Half Section -", "Daylight Left"]} />
            <PaletteItem kind="halfR" lines={["Primary Road Half Section -", "Daylight Right"]} />
          </div>
        </div>
      </div>
      <div className="w-[43px] pt-[47px]">
        {["Assemb...", "Basic", "Lanes", "Shoulde...", "Medians", "Curbs", "Daylight", "Generic"].map((t, i) => (
          <div key={t} className={`flex h-[119px] items-center justify-center rounded-r-lg border-2 border-[#bdbdbd] pb-[3px] ${i === 0 ? "border-l-0 bg-[#f5f5f5] text-[#444]" : "border-b-0 bg-[#d9d9d9] text-[#7c7c7c]"}`}>
            <span className="rotate-180 whitespace-nowrap [writing-mode:vertical-rl]">{t}</span>
          </div>
        ))}
        <div className="h-[10px] rounded-br-lg border-2 border-t-0 border-[#bdbdbd] bg-[#d9d9d9]" />
        <div className="h-[9px] rounded-br-lg border-2 border-t-0 border-[#bdbdbd] bg-[#d9d9d9]" />
        <div className="h-[9px] rounded-br-lg border-2 border-t-0 border-[#bdbdbd] bg-[#d9d9d9]" />
      </div>
    </aside>
  );
}

/* ---------- drawing viewport ---------- */

const SEGMENTS: number[][] = [
  [533, 653.5, 557.5, 642], [533, 679.5, 610.5, 643], [533, 705.5, 661.5, 645], [533, 731, 714.5, 646], [533, 757.5, 767, 648.5],
  [883.5, 865, 1265.5, 686.5], [1025, 868.5, 1405, 691], [1165.5, 873.5, 1547, 695.5], [1448, 881.5, 1829, 703.5],
  [1588, 886.5, 1969.5, 708], [1730, 890.5, 2110.5, 712.5],
  [2332, 885.5, 2556, 781.5], [2384, 887, 2556, 807.5], [2437, 888.5, 2556, 833], [2488, 890.5, 2556, 858.5], [2540, 892, 2556, 885],
];
const RIM: number[][] = [[1260, 876], [1273, 911], [1309, 924.5], [1340, 913.5], [1353, 879], [1338, 844.5], [1308, 829], [1275, 841.5]];

function NavBar() {
  return (
    <svg viewBox="0 0 60 411" className="absolute top-[306px] right-[2px] h-[411px] w-[60px]" fill="#5f656a" stroke="#454b51" strokeWidth="2">
      <rect x="0.500" y="0.500" width="59" height="410" rx="3" fill="#6b6f71" fillOpacity="0.800" stroke="#686e72" strokeWidth="1" />
      <circle cx="48.500" cy="9.500" r="6.500" fill="#4c5257" stroke="none" /><path d="M46 7L51 12M51 7L46 12" stroke="#6b7073" />
      <path d="M30 31H51V53A21.500 21.500 0 1 1 30 31Z" /><circle cx="30" cy="53" r="11" /><path d="M15 69L22 61M45 69L38 61" />
      <path d="M25 92H36L30.500 98Z" fill="#454b51" stroke="none" />
      <path d="M1 107H59" stroke="#62686c" strokeWidth="1" />
      <path d="M21 155L8 142C5 138 9 136 12 139L20 144 18 122C18 117 23 117 24 122L26 134 27 118C28 113 33 113 34 118L35 134 38 120C39 116 44 117 43 122L42 136 47 128C50 125 53 128 51 132L43 154C40 160 25 162 21 155Z" />
      <path d="M8 173L36 202M8 202L35 174" strokeWidth="2.500" /><path d="M6 171H14L6 179ZM37 171V179L29 171ZM6 204V196L14 204Z" fill="#454b51" stroke="none" />
      <circle cx="37" cy="201" r="9" /><path d="M44 207L51 215" strokeWidth="6" />
      <path d="M25 232H36L30.500 238Z" fill="#454b51" stroke="none" />
      <path d="M24 272C0 271 2 284 16 283H40C56 281 56 271 34 271" fill="none" strokeWidth="2.500" />
      <path d="M24 291V256H20L29 247 38 256H34V291Z" /><path d="M11 281L20 275V288Z" fill="#454b51" />
      <path d="M25 308H36L30.500 314Z" fill="#454b51" stroke="none" />
      <path d="M1 323H59" stroke="#62686c" strokeWidth="1" />
      <rect x="6" y="332" width="12" height="12" /><rect x="22" y="332" width="12" height="12" /><rect x="39" y="332" width="12" height="12" />
      <rect x="6" y="351" width="33" height="26" /><path d="M15 357V371L28 364Z" fill="#454b51" />
      <circle cx="48.500" cy="400" r="6.500" fill="#5c6266" /><path d="M45 400H52" />
    </svg>
  );
}

function Viewport() {
  return (
    <div className="relative h-[784px] w-[2023px] overflow-hidden bg-[#212830] text-[#f2f2f2]">
      <NavBar />
      <svg viewBox="533 377 2023 784" className="absolute inset-0 h-[784px] w-[2023px]" fill="none" shapeRendering="crispEdges">
        <defs>
          <linearGradient id="axisZ"><stop offset="0" stopColor="#1247b0" /><stop offset="0.600" stopColor="#2a6df0" /><stop offset="0.850" stopColor="#9cc4ff" /><stop offset="1" stopColor="#1c50b4" /></linearGradient>
          <linearGradient id="axisY" x2="0" y2="1"><stop offset="0" stopColor="#0d6b0d" /><stop offset="0.400" stopColor="#55ee50" /><stop offset="1" stopColor="#043a04" /></linearGradient>
          <linearGradient id="axisX" x2="0" y2="1"><stop offset="0" stopColor="#6a1015" /><stop offset="0.500" stopColor="#9e1c20" /><stop offset="1" stopColor="#5c0d10" /></linearGradient>
          <linearGradient id="face" x2="0" y2="1"><stop offset="0" stopColor="#b4b5b6" /><stop offset="1" stopColor="#8f9091" /></linearGradient>
        </defs>
        <g stroke="#fff" strokeWidth="1">
          {SEGMENTS.map(([a, b, c, d]) => <path key={`${a}-${b}`} d={`M${a} ${b}L${c} ${d}`} />)}
          {RIM.map(([a, b]) => <path key={`${a}-${b}`} d={`M${a} ${b}l382 -178`} />)}
          <ellipse cx="1306" cy="877.500" rx="47" ry="48.500" />
          <ellipse cx="1688" cy="699.500" rx="47" ry="48.500" />
        </g>
        <g shapeRendering="auto">
          <path d="M579 986H603L580 1009.500H603" stroke="#1a5fd6" strokeWidth="1.500" />
          <path d="M627 1070L651 1094M651 1070L627 1094" stroke="#b3262c" strokeWidth="1.300" />
          <path d="M533 1102L581 1105V1116L533 1112Z" fill="url(#axisY)" />
          <path d="M587 1106L630 1095C635 1096 637 1102 635 1106L590 1115Z" fill="url(#axisX)" />
          <rect x="578" y="1014" width="10" height="97" fill="url(#axisZ)" /><path d="M577 1015L583 1009 589 1015Z" fill="#1544a8" />
          <path d="M1428 974L1425 965 1417 954C1417 950 1421 950 1424 953L1428 957 1423 939C1423 935 1427 935 1428 938L1433 951 1434 934C1435 930 1438 930 1439 934L1441 950 1446 935C1448 932 1451 934 1450 938L1447 952 1453 942C1456 940 1458 942 1457 945L1450 963 1448 975Z" fill="#fff" stroke="#11151a" strokeWidth="2" />
          <path d="M1428 974L1425 965 1417 954C1417 950 1421 950 1424 953L1428 957 1423 939C1423 935 1427 935 1428 938L1433 951 1434 934C1435 930 1438 930 1439 934L1441 950 1446 935C1448 932 1451 934 1450 938L1447 952 1453 942C1456 940 1458 942 1457 945L1450 963 1448 975Z" fill="#fff" />
          <ellipse cx="2466" cy="544" rx="67" ry="12" stroke="#454d55" strokeWidth="6" />
          <path d="M2393 544A73 14 0 0 1 2409 535L2420 538A58 9 0 0 0 2409 545ZM2540 544A73 14 0 0 0 2523 535L2513 538A58 9 0 0 1 2524 545Z" fill="#454d55" />
          <text x="0" y="0" fontFamily="Liberation Sans, sans-serif" fontWeight="700" fontSize="17" fill="#c4c6c8" transform="matrix(1 0.150 -0.900 0.330 2406 537)">N</text>
          <text x="0" y="0" fontFamily="Liberation Sans, sans-serif" fontWeight="700" fontSize="17" fill="#c4c6c8" transform="matrix(1.200 -0.150 0.700 0.350 2412 559)">W</text>
          <text x="0" y="0" fontFamily="Liberation Sans, sans-serif" fontWeight="700" fontSize="17" fill="#c4c6c8" transform="matrix(1.200 0.050 -0.700 0.350 2524 551)">S</text>
          <path d="M2428 485L2477 486V544L2429 539Z" fill="url(#face)" stroke="#888" strokeWidth="0.500" />
          <path d="M2477 486L2502 485V537L2477 544Z" fill="url(#face)" stroke="#888" strokeWidth="0.500" />
          <path d="M2467 497H2481V532H2467Z" fill="#a3abb5" fillOpacity="0.700" /><path d="M2477 486V544" stroke="#555" strokeDasharray="10 3" />
          <text x="2441" y="519" fontFamily="Open Sans, sans-serif" fontWeight="700" fontSize="14" textLength="23" lengthAdjust="spacingAndGlyphs" fill="#3a3d40">LEFT</text>
          <text x="2480" y="519" fontFamily="Open Sans, sans-serif" fontWeight="700" fontSize="14" textLength="19" lengthAdjust="spacingAndGlyphs" fill="#3a3d40" transform="rotate(-5 2480 519)">FRONT</text>
          <rect x="2442" y="402" width="19" height="7" fill="#e4e4e4" />
          <path d="M2487 394V392H2501V406H2498" stroke="#e4e4e4" strokeWidth="2.500" /><rect x="2484" y="397" width="12" height="12" stroke="#eee" strokeWidth="4" />
          <path d="M2524 394L2538 408M2538 394L2524 408" stroke="#eee" strokeWidth="4.500" />
        </g>
      </svg>
      <span className="absolute top-[5px] left-[5px] leading-8 tracking-[-0.02px] whitespace-nowrap">[−][Custom View][Wireframe (Fast)]</span>
      <div className="absolute top-[230px] left-[1886px] flex h-[35px] w-[94px] items-center gap-[11px] rounded-md border-2 border-[#85868f] bg-[#9c9ca6] pb-[3px] pl-[6px] font-['Liberation_Sans',sans-serif] text-[21px] tracking-[-0.2px] text-[#50525c]">
        <span className="w-[46px]">WCS</span>
        <svg viewBox="0 0 17 10" className="h-[10px] w-[17px]" fill="#b6b8c0" stroke="#8a8c96"><path d="M1 1H16L8.500 9Z" /></svg>
      </div>
    </div>
  );
}

/* ---------- command window ---------- */

const HISTORY = [
  "Command: _QSAVE",
  "Command: SWEEP",
  "Current wire frame density:  ISOLINES=8, Closed profiles creation mode = Solid",
  "Select objects to sweep or [MOde]: 1 found",
  "Select objects to sweep or [MOde]:",
  "Select sweep path or [Alignment/Base point/Scale/Twist]:",
  "Command:",
  "Press ESC or ENTER to exit, or right-click to display shortcut-menu.",
];

function CommandWindow() {
  return (
    <div className="mt-[8px] flex h-[282px] bg-[#d9d9d9] pt-[2px] pb-[2px] font-['DejaVu_Sans_Mono',monospace] text-[22.5px] tracking-[0.454px] text-black">
      <div className="flex w-[50px] shrink-0 flex-col items-center pt-[9px]">
        <div className="grid grid-cols-6 gap-x-[3px] gap-y-[3px]">{Array.from({ length: 12 }, (_, i) => <div key={i} className="size-[3px] bg-[#777]" />)}</div>
        <svg viewBox="0 0 20 20" className="mt-[16px] size-[20px]" stroke="#666" strokeWidth="4"><path d="M2 2L18 18M18 2L2 18" /></svg>
        <svg viewBox="0 0 32 32" className="mt-[22px] size-8" fill="#f5f5f5" stroke="#666" strokeWidth="2"><path d="M2 26L15 13C13 6 18 1 25 2L20 7 22 11 26 12 31 7C32 14 26 19 19 17L6 30C3 32 0 29 2 26Z" /></svg>
      </div>
      <div className="flex flex-1 flex-col">
        <div className="flex h-[237px] flex-col justify-end overflow-hidden bg-[#c8c8c8] pb-[4px] pl-[4px] leading-[31px] whitespace-pre">
          {HISTORY.map((l, i) => <div key={i} className="h-[31px] shrink-0">{l}</div>)}
        </div>
        <div className="flex h-[41px] items-center border-t-2 border-[#bbb] bg-white pl-[8px]">
          <svg viewBox="0 0 32 32" className="size-8" fill="none" stroke="#444" strokeWidth="2">
            <path d="M11 8C13 0 19 0 21 8M10 12C9 17 10 21 11 23M13 27C16 33 20 29 21 23M7 10C-1 15 1 20 7 22M25 10C33 14 32 20 25 22 22 23 19 23 16 23" /><path d="M17 5L23 9 24 3M20 19L15 23 20 27" /><path d="M12 16H20M16 12V20" stroke="#1c8be0" />
          </svg>
          <Down className="ml-[4px] h-[9px] w-4" />
          <span className="ml-[12px] font-bold">3DORBIT</span>
        </div>
      </div>
    </div>
  );
}

/* ---------- status bar ---------- */

const box = "flex h-12 shrink-0 items-center bg-[#f5f5f5] ";
const on = "flex shrink-0 items-center justify-center border-2 border-[#5580a6] bg-[#cce5fb] ";

const Compass = ({ children, c = "#666" }: { children?: React.ReactNode; c?: string }) => (
  <Ic><path d="M15 1L20 18 30 31 19 26 19 22H11V26L1 31 10 18Z" fill={c} stroke="none" />{children}</Ic>
);

function StatusBar() {
  return (
    <footer className="flex h-[60px] shrink-0 items-center border-b-2 border-[#b9b9b9] bg-[#d9d9d9]">
      <div className="flex h-[58px] w-[1114px] shrink-0 items-start pl-[32px]">
        <div className="pt-[12px]"><Burger /></div>
        <div className="ml-[17px] flex h-[48px] w-[141px] items-center bg-[#f5f5f5] pt-[3px] pl-[34px] font-bold tracking-[0.1px] [clip-path:polygon(20px_0,100%_0,calc(100%-20px)_100%,0_100%)]">Model</div>
        <span className="ml-[13px] w-[102px] pt-[9px] leading-8">Layout1</span>
        <Slash className="mt-[8px]" />
        <Plus className="mt-[10px] ml-[20px]" />
        <Slash className="mt-[8px] ml-[20px]" />
      </div>
      <div className="flex pb-[2px]">
        <div className={box + "w-[95px] justify-center pt-[3px]"}>MODEL</div>
        <div className={box + "ml-[6px] w-[128px] pl-[9px]"}>
          <Ic className="size-[30px]"><path d="M0 8H32M0 16H32M0 24H32M8 0V32M16 0V32M24 0V32" /></Ic>
          <div className="ml-[21px] grid grid-cols-3 gap-x-[6px] gap-y-[6px]">{Array.from({ length: 9 }, (_, i) => <div key={i} className="size-[4px] bg-[#555]" />)}</div>
          <div className="ml-[20px]"><MidDown /></div>
        </div>
        <div className={box + "ml-[6px] w-[207px] pl-[8px]"}>
          <Ic><path d="M1 0V31H32M1 21H11V31" /></Ic>
          <div className={on + "ml-[10px] h-[44px] w-[44px]"}><Ic><circle cx="13.500" cy="17" r="12.500" stroke="#444" /><path d="M32 17H13L28 3" stroke="#444" /></Ic></div>
          <div className="ml-[10px]"><MidDown /></div>
          <div className="ml-[17px]"><Ic><path d="M3 4L28 29" stroke="#d02a2a" strokeWidth="2.500" /><path d="M16 0V32" stroke="#22b04a" /><rect x="13.500" y="13.500" width="5" height="5" fill="#fff" /></Ic></div>
          <div className="ml-[15px]"><MidDown /></div>
        </div>
        <div className={box + "ml-[3px] w-[128px] pl-[2px]"}>
          <div className={on + "h-[44px] w-[44px]"}><Ic><path d="M24 5L2 28H32" stroke="#444" /><rect x="10" y="14" width="6" height="6" fill="#444" stroke="none" /></Ic></div>
          <div className={on + "ml-[4px] h-[44px] w-[44px]"}><Ic><rect x="1" y="1" width="8" height="9" stroke="#444" /><path d="M13 5H31V31H5V13" stroke="#444" /></Ic></div>
          <div className="ml-[10px]"><MidDown /></div>
        </div>
        <div className={box + "ml-[6px] w-[212px] pl-[2px]"}>
          <div className={on + "h-[44px] w-[44px]"}><Compass c="#444"><ellipse cx="27" cy="8" rx="5" ry="5.500" stroke="#444" /></Compass></div>
          <div className="ml-[10px]"><Compass><path d="M27 4L21 12H26L24 18 31 9H26Z" fill="#666" stroke="none" /></Compass></div>
          <div className="ml-[16px]"><Compass /></div>
          <span className="ml-[17px] w-[27px] pt-[3px] tracking-[-1.5px]">1:1</span>
          <div className="ml-[7px]"><MidDown /></div>
        </div>
        <div className={box + "ml-[6px] w-[80px] pl-[8px]"}>
          <Ic><circle cx="16" cy="16" r="8.500" strokeWidth="6" /><path d="M16 1V7M16 25V31M1 16H7M25 16H31M5.500 5.500L9.500 9.500M22.500 22.500L26.500 26.500M26.500 5.500L22.500 9.500M5.500 26.500L9.500 22.500" strokeWidth="5.500" /></Ic>
          <div className="ml-[16px]"><MidDown /></div>
        </div>
        <div className={box + "ml-[2px] w-[48px] justify-center"}><Ic><path d="M0 16H32M16 0V32" strokeWidth="4" /></Ic></div>
        <div className={box + "ml-[6px] w-[48px] justify-center"}><Ic><rect x="1" y="1" width="12" height="12" /><circle cx="25" cy="13" r="6" /><path d="M13 20L19 31H7Z" /></Ic></div>
        <div className={box + "ml-[8px] w-[147px] pl-[8px]"}>
          <Ic><path d="M4 13V6L16 0 28 6V13" strokeDasharray="3 3" /><path d="M4 20L16 25 28 20V26L16 31 4 26Z" fill="#eee" /><path d="M1 16L16 7 31 16 16 24Z" fill="#5ea9e0" stroke="none" /></Ic>
          <span className="ml-[22px] pt-[3px]">3.5000</span>
        </div>
        <div className={box + "ml-[6px] w-[80px] pl-[8px]"}>
          <Ic><path d="M1 6V1H6M26 1H31V6M1 26V31H6M26 31H31V26" /><path d="M6 23L8 13 18 7H25V16L12 27Z" fill="#f5f5f5" /><path d="M9 21L11 14 17 10 20 14 12 23Z" fill="#5ea9e0" stroke="none" /><circle cx="22" cy="10" r="1.500" /></Ic>
          <div className="ml-[16px]"><MidDown /></div>
        </div>
        <div className={on + "h-12 w-[48px]"}><Ic><path d="M4 24L5 13 19 3H28V15L14 30Z" fill="#444" stroke="none" strokeLinejoin="round" /><circle cx="24" cy="8" r="2" fill="#cce5fb" stroke="none" /><path d="M11 14L19 11M11 19L19 15" stroke="#cce5fb" /></Ic></div>
        <div className={box + "ml-[6px] w-[60px] justify-center"}>
          <Ic><path d="M14 23H1V1H30V12" /><path d="M1 20L9 6 20 20 30 3" strokeWidth="1.500" /><Dot x={10} y={6} /><path d="M23 15L32 32H14Z" fill="#e87a2c" stroke="#f5f5f5" strokeWidth="1" /><path d="M23 21V26M23 28V30" stroke="#fff" /></Ic>
        </div>
        <div className={box + "ml-[6px] w-[48px] justify-center"}><Ic><rect x="1" y="5" width="30" height="23" /><path d="M20 8H28V16Z M12 26H4V18Z" fill="#666" stroke="none" /><path d="M26 10L18 16M6 24L14 18" /></Ic></div>
        <div className={box + "ml-[4px] w-[48px] justify-center"}><Ic><path d="M0 4H32M0 16H32M0 28H32" strokeWidth="4" /></Ic></div>
      </div>
    </footer>
  );
}

export default function App() {
  return (
    <div className="flex h-[1530px] w-[2560px] flex-col overflow-hidden bg-[#eee] font-['Open_Sans',sans-serif] text-[23px] tracking-[-0.33px] text-[#3c3c3c]">
      <TitleBar />
      <RibbonTabs />
      <Ribbon />
      <FileTabs />
      <div className="flex h-[1090px] shrink-0 bg-[#f5f5f5]">
        <Palette />
        <main className="flex-1 pt-[8px]">
          <Viewport />
          <CommandWindow />
        </main>
      </div>
      <StatusBar />
    </div>
  );
}
